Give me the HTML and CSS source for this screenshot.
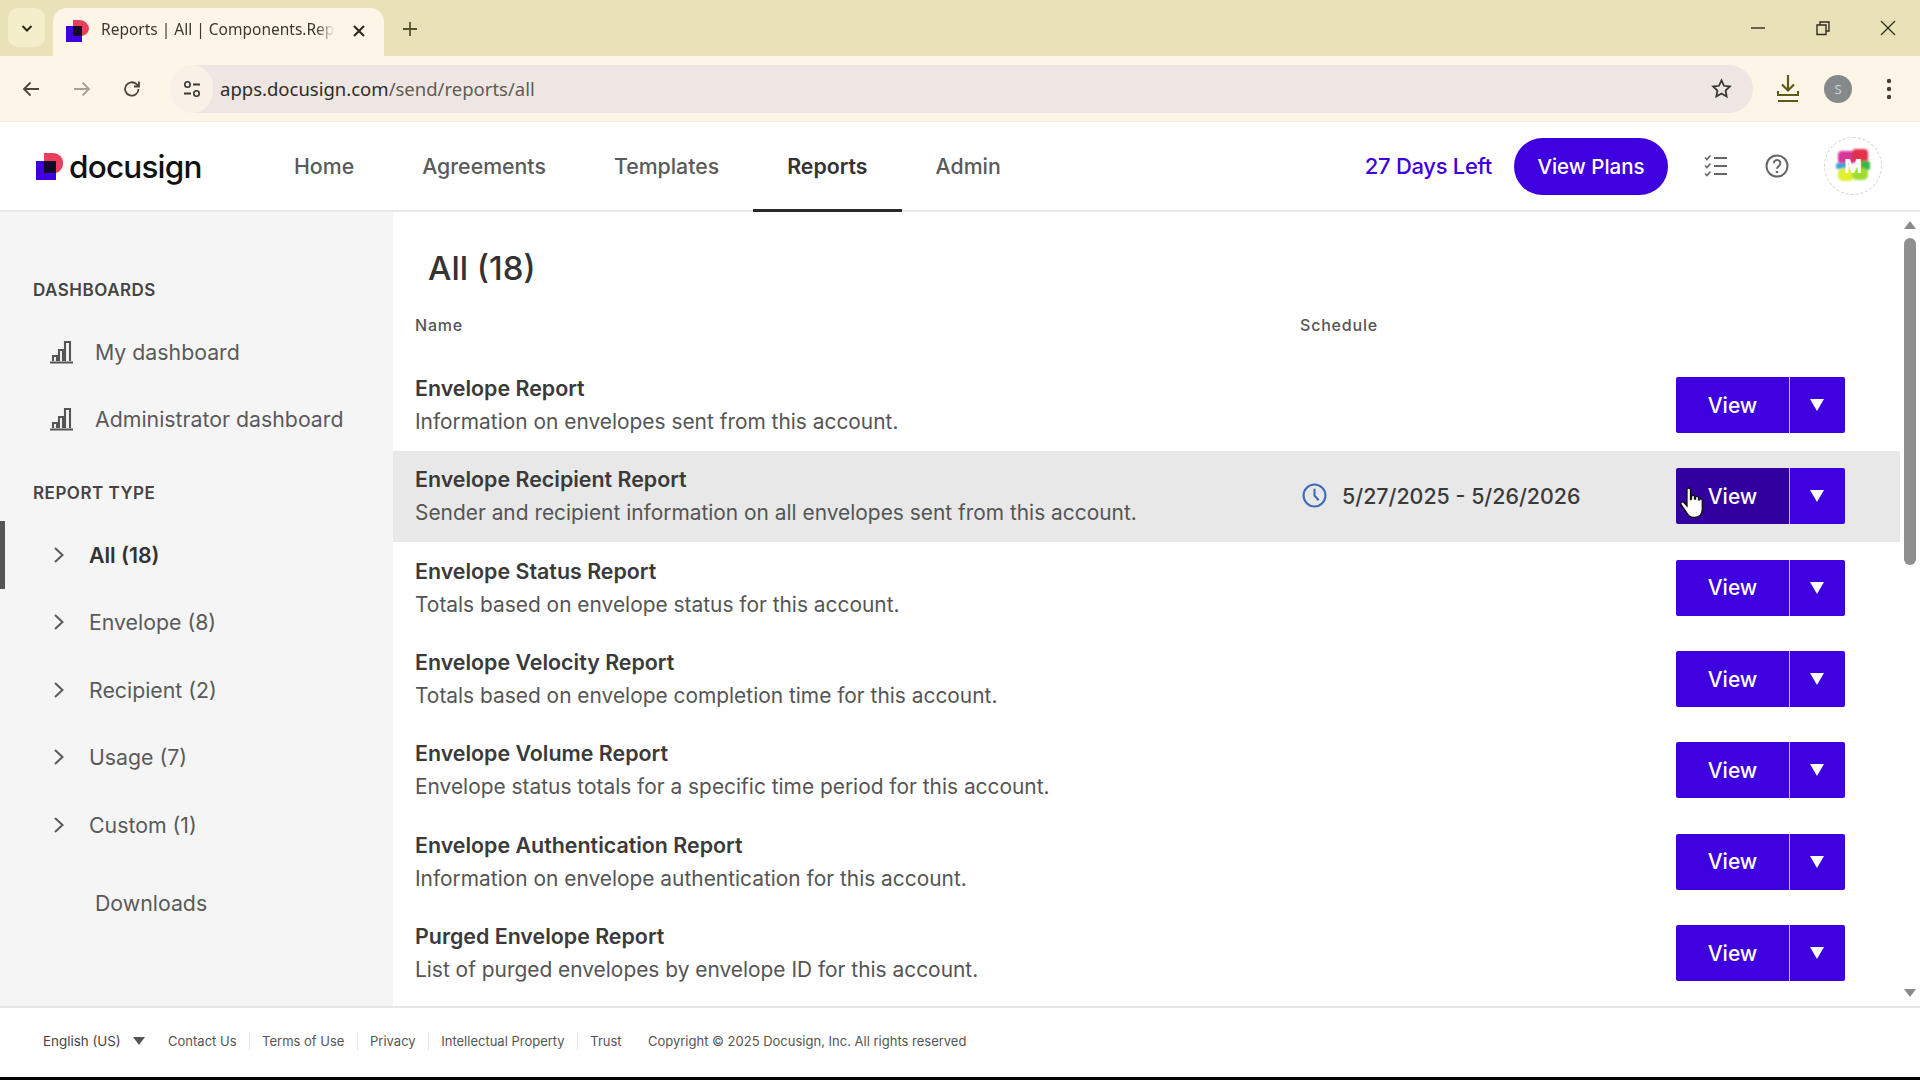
FILE: index.html
```html
<!DOCTYPE html>
<html lang="en">
<head>
<meta charset="utf-8">
<title>Reports | All | Components.Reports</title>
<link rel="stylesheet" href="styles.css">
</head>
<body>
<div class="window">
  <div class="tabbar">
    <div class="tab-list"><svg viewBox="0 0 16 16" width="16" height="16"><path d="M3.5 6 8 10.5 12.5 6" fill="none" stroke="#2b2a1c" stroke-width="2"/></svg></div>
    <div class="tab">
      <svg class="favicon" viewBox="0 0 23 22" width="23" height="22"><path d="M7 0h7a9 9 0 0 1 9 9 9 9 0 0 1-7 7H7z" fill="#e8405c"/><rect x="0" y="6" width="16" height="16" fill="#3f00e0"/><rect x="7" y="6" width="9" height="10" fill="#14082a"/></svg>
      <span class="tab-title">Reports | All | Components.Rep</span>
      <svg class="tab-close" viewBox="0 0 14 14" width="14" height="14"><path d="M2 2l10 10M12 2 2 12" stroke="#2f2c20" stroke-width="2.2"/></svg>
    </div>
    <svg class="new-tab" viewBox="0 0 16 16" width="16" height="16"><path d="M8 1v14M1 8h14" stroke="#55502e" stroke-width="1.8"/></svg>
    <div class="win-controls">
      <svg viewBox="0 0 16 16" width="16" height="16"><path d="M1 8h14" stroke="#2f2c20" stroke-width="1.4"/></svg>
      <svg viewBox="0 0 16 16" width="16" height="16"><path d="M2 5h9v9.500H2zM5 5V2h9v9h-3" fill="none" stroke="#2f2c20" stroke-width="1.4"/></svg>
      <svg viewBox="0 0 16 16" width="16" height="16"><path d="M1 1l14 14M15 1 1 15" stroke="#2f2c20" stroke-width="1.3"/></svg>
    </div>
  </div>
  <div class="toolbar">
    <div class="tool"><svg viewBox="0 0 20 20" width="20" height="20"><path d="M18 10H3M9.500 3.500 3 10l6.500 6.500" fill="none" stroke="#4a463c" stroke-width="1.8"/></svg></div>
    <div class="tool"><svg viewBox="0 0 20 20" width="20" height="20"><path d="M2 10h15M10.500 3.500 17 10l-6.500 6.500" fill="none" stroke="#a5a196" stroke-width="1.8"/></svg></div>
    <div class="tool"><svg viewBox="0 0 20 20" width="20" height="20"><path d="M16.500 10a6.700 6.700 0 1 1-2-4.800L17 7.500M17 2.500v5h-5" fill="none" stroke="#4a463c" stroke-width="1.8"/></svg></div>
    <div class="address">
      <span class="site-chip"><svg viewBox="0 0 20 20" width="20" height="20"><circle cx="5.500" cy="5.500" r="2.700" fill="none" stroke="#3a3730" stroke-width="1.600"/><path d="M11 5.500h7M2 14.500h7" stroke="#3a3730" stroke-width="1.800"/><circle cx="14.500" cy="14.500" r="2.700" fill="none" stroke="#3a3730" stroke-width="1.600"/></svg></span>
      <span class="url">apps.docusign.com<span class="url-path">/send/reports/all</span></span>
      <svg class="star" viewBox="0 0 20 20" width="21" height="21"><path d="M10 2.200l2.400 5.200 5.600.7-4.100 3.900 1 5.600-4.900-2.800-4.900 2.800 1-5.600L2 8.100l5.600-.7z" fill="none" stroke="#3a3730" stroke-width="1.700"/></svg>
    </div>
    <svg class="dl" viewBox="0 0 24 30" width="24" height="30"><path d="M12 1v15M6 10.500l6 6 6-6" fill="none" stroke="#5f5a14" stroke-width="2.200"/><path d="M2 17v4h20v-4" fill="none" stroke="#5f5a14" stroke-width="2"/><path d="M2 27h20" stroke="#5f5a14" stroke-width="2"/></svg>
    <span class="profile">S</span>
    <svg class="kebab" viewBox="0 0 6 22" width="6" height="22"><circle cx="3" cy="3" r="2.200" fill="#45423a"/><circle cx="3" cy="11" r="2.200" fill="#45423a"/><circle cx="3" cy="19" r="2.200" fill="#45423a"/></svg>
  </div>

  <header class="appbar">
    <div class="logo">
      <svg viewBox="0 0 27 27" width="27" height="27"><path d="M8 0h10a9.500 9.500 0 0 1 9 10 9.500 9.500 0 0 1-7 10H8z" fill="#e8405c"/><rect x="0" y="8" width="20" height="19" fill="#3f00e0"/><rect x="8" y="8" width="12" height="12" fill="#12062a"/></svg>
      <span class="logo-text">docusign</span>
    </div>
    <nav class="nav">
      <a class="nav-item">Home</a>
      <a class="nav-item">Agreements</a>
      <a class="nav-item">Templates</a>
      <a class="nav-item active">Reports</a>
      <a class="nav-item">Admin</a>
    </nav>
    <div class="appbar-right">
      <span class="days">27 Days Left</span>
      <button class="plans">View Plans</button>
      <svg class="tasks" viewBox="0 0 24 24" width="24" height="24"><path d="M1 3.500l2 2 3.500-4M1 11.500l2 2 3.500-4M1 19.500l2 2 3.500-4" fill="none" stroke="#666" stroke-width="1.600"/><path d="M10 4h13M10 12h13M10 20h13" stroke="#666" stroke-width="2.200"/></svg>
      <svg class="help" viewBox="0 0 24 24" width="24" height="24"><circle cx="12" cy="12" r="10.500" fill="none" stroke="#666" stroke-width="2"/><path d="M8.800 9.300a3.300 3.300 0 1 1 5 2.800c-1.200.8-1.800 1.300-1.800 2.700" fill="none" stroke="#666" stroke-width="2"/><circle cx="12" cy="18" r="1.300" fill="#666"/></svg>
      <div class="avatar">
        <svg viewBox="0 0 40 40" width="40" height="40">
          <defs><filter id="soft"><feGaussianBlur stdDeviation="1.200"/></filter></defs>
          <g filter="url(#soft)">
            <rect x="5" y="5" width="16" height="13" rx="4" fill="#d6369a"/>
            <rect x="19" y="3" width="16" height="14" rx="4" fill="#e0324a"/>
            <rect x="3" y="17" width="12" height="6" rx="2" fill="#3aa0d8"/>
            <rect x="27" y="15" width="10" height="9" rx="2" fill="#39b54a"/>
            <rect x="5" y="22" width="16" height="13" rx="5" fill="#dff02e"/>
            <rect x="19" y="22" width="16" height="12" rx="5" fill="#9fdc32"/>
          </g>
          <text x="20" y="27" class="avatar-m">M</text>
        </svg>
      </div>
    </div>
  </header>

  <div class="body">
    <aside class="sidebar">
      <h2 class="side-head">DASHBOARDS</h2>
      <a class="side-item dash"><svg viewBox="0 0 24 24" width="24" height="24"><path d="M1 22.500h23M4 21v-5h4v5M10 21V10h4v11M16 21V2h5v19" fill="none" stroke="#555" stroke-width="2.100"/></svg><span>My dashboard</span></a>
      <a class="side-item dash"><svg viewBox="0 0 24 24" width="24" height="24"><path d="M1 22.500h23M4 21v-5h4v5M10 21V10h4v11M16 21V2h5v19" fill="none" stroke="#555" stroke-width="2.100"/></svg><span>Administrator dashboard</span></a>
      <h2 class="side-head second">REPORT TYPE</h2>
      <a class="side-item type current"><svg viewBox="0 0 12 18" width="12" height="18"><path d="M2 2l7.500 7L2 16" fill="none" stroke="#5a5a5a" stroke-width="2"/></svg><span>All (18)</span></a>
      <a class="side-item type"><svg viewBox="0 0 12 18" width="12" height="18"><path d="M2 2l7.500 7L2 16" fill="none" stroke="#5a5a5a" stroke-width="2"/></svg><span>Envelope (8)</span></a>
      <a class="side-item type"><svg viewBox="0 0 12 18" width="12" height="18"><path d="M2 2l7.500 7L2 16" fill="none" stroke="#5a5a5a" stroke-width="2"/></svg><span>Recipient (2)</span></a>
      <a class="side-item type"><svg viewBox="0 0 12 18" width="12" height="18"><path d="M2 2l7.500 7L2 16" fill="none" stroke="#5a5a5a" stroke-width="2"/></svg><span>Usage (7)</span></a>
      <a class="side-item type"><svg viewBox="0 0 12 18" width="12" height="18"><path d="M2 2l7.500 7L2 16" fill="none" stroke="#5a5a5a" stroke-width="2"/></svg><span>Custom (1)</span></a>
      <a class="side-item downloads"><span>Downloads</span></a>
    </aside>

    <main class="main">
      <div class="content">
        <h1 class="title">All (18)</h1>
        <div class="table-head"><span>Name</span><span>Schedule</span></div>

        <div class="row">
          <div><div class="row-title">Envelope Report</div><div class="row-desc">Information on envelopes sent from this account.</div></div>
          <div></div>
          <div class="split"><button class="split-main">View</button><button class="split-caret"><svg viewBox="0 0 14 12" width="14" height="12"><path d="M0 0h14L7 12z" fill="#fff"/></svg></button></div>
        </div>
        <div class="row hovered">
          <div><div class="row-title">Envelope Recipient Report</div><div class="row-desc">Sender and recipient information on all envelopes sent from this account.</div></div>
          <div class="sched"><svg viewBox="0 0 24 24" width="25" height="25"><circle cx="12" cy="12" r="10.500" fill="none" stroke="#3f6db5" stroke-width="2"/><path d="M12 5.500V12l4 4.500" fill="none" stroke="#3f6db5" stroke-width="2"/></svg><span>5/27/2025 - 5/26/2026</span></div>
          <div class="split"><button class="split-main">View</button><button class="split-caret"><svg viewBox="0 0 14 12" width="14" height="12"><path d="M0 0h14L7 12z" fill="#fff"/></svg></button>
            <svg class="cursor" viewBox="0 0 24 32" width="24" height="34"><path d="M7 2.500c0-2 3.500-2 3.500 0v10l1-.5V9.500c0-1.700 3-1.700 3 0V12l1 .2v-1.500c0-1.700 3-1.700 3 0v2l1 .3c0-1.500 2.800-1.500 2.800 0V22c0 5-3 8.500-8 8.500-4.500 0-6-2-8-5.500L1 17.500c-1-2 1.500-3.500 3-2l3 3.500z" fill="#fff" stroke="#111" stroke-width="1.300"/></svg>
          </div>
        </div>
        <div class="row">
          <div><div class="row-title">Envelope Status Report</div><div class="row-desc">Totals based on envelope status for this account.</div></div>
          <div></div>
          <div class="split"><button class="split-main">View</button><button class="split-caret"><svg viewBox="0 0 14 12" width="14" height="12"><path d="M0 0h14L7 12z" fill="#fff"/></svg></button></div>
        </div>
        <div class="row">
          <div><div class="row-title">Envelope Velocity Report</div><div class="row-desc">Totals based on envelope completion time for this account.</div></div>
          <div></div>
          <div class="split"><button class="split-main">View</button><button class="split-caret"><svg viewBox="0 0 14 12" width="14" height="12"><path d="M0 0h14L7 12z" fill="#fff"/></svg></button></div>
        </div>
        <div class="row">
          <div><div class="row-title">Envelope Volume Report</div><div class="row-desc">Envelope status totals for a specific time period for this account.</div></div>
          <div></div>
          <div class="split"><button class="split-main">View</button><button class="split-caret"><svg viewBox="0 0 14 12" width="14" height="12"><path d="M0 0h14L7 12z" fill="#fff"/></svg></button></div>
        </div>
        <div class="row">
          <div><div class="row-title">Envelope Authentication Report</div><div class="row-desc">Information on envelope authentication for this account.</div></div>
          <div></div>
          <div class="split"><button class="split-main">View</button><button class="split-caret"><svg viewBox="0 0 14 12" width="14" height="12"><path d="M0 0h14L7 12z" fill="#fff"/></svg></button></div>
        </div>
        <div class="row">
          <div><div class="row-title">Purged Envelope Report</div><div class="row-desc">List of purged envelopes by envelope ID for this account.</div></div>
          <div></div>
          <div class="split"><button class="split-main">View</button><button class="split-caret"><svg viewBox="0 0 14 12" width="14" height="12"><path d="M0 0h14L7 12z" fill="#fff"/></svg></button></div>
        </div>
      </div>
      <div class="scrollbar">
        <svg viewBox="0 0 12 8" width="12" height="8"><path d="M0 8l6-8 6 8z" fill="#8a8a8a"/></svg>
        <div class="scroll-track"><div class="scroll-thumb"></div></div>
        <svg viewBox="0 0 12 8" width="12" height="8"><path d="M0 0l6 8 6-8z" fill="#8a8a8a"/></svg>
      </div>
    </main>
  </div>

  <footer class="footer">
    <span class="lang">English (US)<svg viewBox="0 0 12 8" width="12" height="8"><path d="M0 0h12L6 8z" fill="#555"/></svg></span>
    <a class="foot-link">Contact Us</a>
    <a class="foot-link">Terms of Use</a>
    <a class="foot-link">Privacy</a>
    <a class="foot-link">Intellectual Property</a>
    <a class="foot-link last">Trust</a>
    <span class="copyright">Copyright © 2025 Docusign, Inc. All rights reserved</span>
  </footer>
  <div class="taskbar"></div>
</div>
</body>
</html>
```

FILE: styles.css
```css
* { box-sizing: border-box; }
html, body { margin: 0; height: 100%; overflow: hidden; }
body { font-family: Inter, "Liberation Sans", sans-serif; color: #333; background: #fff; }
svg { display: block; flex: none; }
button { font-family: inherit; border: 0; cursor: pointer; }

.window { width: 1920px; height: 1080px; display: flex; flex-direction: column; }

/* browser chrome */
.tabbar { height: 56px; flex: none; background: #e9e2b9; display: flex; align-items: flex-end; padding-left: 8px; position: relative; }
.tab-list { width: 37px; height: 39px; margin-bottom: 9px; border-radius: 10px; background: #f5eecb; display: flex; align-items: center; justify-content: center; }
.tab { width: 331px; height: 48px; margin-left: 8px; padding-left: 13px; background: #fdf6e8; border-radius: 14px 14px 0 0; display: flex; align-items: center; }
.favicon { margin-top: -2px; }
.tab-title { width: 234px; margin-left: 12px; padding-bottom: 6px; font: 15.500px "Noto Sans", sans-serif; color: #3a3830; white-space: nowrap; -webkit-mask-image: linear-gradient(90deg, #000 92%, transparent); mask-image: linear-gradient(90deg, #000 92%, transparent); }
.tab-close { margin-left: 17px; margin-bottom: 2px; }
.new-tab { margin: 0 0 19px 18px; }
.win-controls { margin-left: auto; align-self: stretch; display: flex; align-items: center; gap: 49px; padding-right: 24px; padding-bottom: 0; }

.toolbar { height: 66px; flex: none; background: #fdf6e8; display: flex; align-items: center; padding-left: 10px; border-bottom: 1px solid #efe9dd; }
.tool { width: 42px; height: 42px; margin-right: 8.500px; display: flex; align-items: center; justify-content: center; }
.address { width: 1582px; height: 48px; margin-left: 9.500px; border-radius: 24px; background: #eee6e2; display: flex; align-items: center; }
.site-chip { width: 42px; height: 48px; border-radius: 24px; background: #f9f1e8; display: flex; align-items: center; justify-content: center; }
.url { margin-left: 7px; font: 18.500px "Noto Sans", sans-serif; color: #2e2c28; white-space: nowrap; }
.url-path { color: #5f5c55; }
.star { margin-left: auto; margin-right: 21px; }
.dl { margin-left: 23px; }
.profile { width: 28px; height: 28px; margin-left: 24px; border-radius: 50%; background: #85898c; color: #c6d2dc; font: 13px/28px "Noto Sans", sans-serif; text-align: center; }
.kebab { margin-left: 34px; }

/* app header */
.appbar { height: 90px; flex: none; display: flex; align-items: stretch; padding: 0 38px 0 36px; border-bottom: 2px solid #e9e9e9; background: #fff; }
.logo { display: flex; align-items: center; width: 166px; gap: 6px; }
.logo-text { padding-top: 2px; font-size: 31.500px; font-weight: 500; letter-spacing: -0.8px; color: #111; line-height: 1; }
.nav { display: flex; margin-left: 58px; }
.nav-item { display: flex; align-items: center; padding: 0 34px; font-size: 21.300px; font-weight: 500; color: #5a5a5a; margin-bottom: -2px; border-bottom: 3px solid transparent; }
.nav-item.active { color: #333; border-bottom-color: #2a2a2a; font-weight: 600; }
.appbar-right { margin-left: auto; display: flex; align-items: center; }
.days { font-size: 22px; font-weight: 500; color: #3f00e0; letter-spacing: -0.3px; }
.plans { width: 154px; height: 57px; margin-left: 22px; border-radius: 29px; background: #3f00e0; color: #fff; font-size: 20.500px; font-weight: 500; }
.tasks { margin-left: 36px; }
.help { margin-left: 37px; }
.avatar { width: 58px; height: 58px; margin-left: 35px; border-radius: 50%; border: 1px dashed #cfcfcf; display: flex; align-items: center; justify-content: center; }
.avatar-m { font: 700 19px Inter, sans-serif; fill: #fff; text-anchor: middle; }

/* body */
.body { flex: 1; min-height: 0; display: flex; }
.sidebar { width: 393px; flex: none; background: #f5f5f6; padding-top: 66px; }
.side-head { margin: 0 0 16px 33px; height: 24px; font-size: 17px; line-height: 24px; font-weight: 600; letter-spacing: 0.5px; color: #444; }
.side-head.second { margin-top: 28px; }
.side-item { height: 67.500px; display: flex; align-items: center; font-size: 21.300px; color: #5a5a5a; }
.dash { padding-left: 49px; }
.dash span { margin-left: 22px; }
.type { padding-left: 53px; }
.type span { margin-left: 24px; }
.type.current { color: #333; font-weight: 600; box-shadow: inset 5px 0 0 #555; }
.downloads { padding-left: 95px; margin-top: 11px; }

.main { flex: 1; min-width: 0; display: flex; }
.content { flex: 1; min-width: 0; padding-top: 36px; overflow: hidden; }
.title { margin: 0 0 27px 35px; height: 40px; font-size: 33px; line-height: 40px; font-weight: 500; color: #333; }
.table-head { display: grid; grid-template-columns: 885px 1fr; height: 20px; margin-bottom: 24.500px; padding-left: 22px; font-size: 16px; line-height: 20px; font-weight: 500; letter-spacing: 0.8px; color: #555; }
.row { height: 91.330px; display: grid; grid-template-columns: 885px 1fr 169px; align-items: center; padding: 0 55px 0 22px; }
.row.hovered { background: #e8e8e8; }
.row-title { font-size: 21.400px; line-height: 34px; font-weight: 600; color: #3a3a3a; }
.row-desc { font-size: 20.900px; line-height: 34px; color: #555; }
.sched { display: flex; align-items: center; gap: 15px; padding: 0 0 1px 2px; font-size: 21.400px; font-weight: 500; color: #3a3a3a; }
.split { display: flex; height: 56px; position: relative; }
.split-main { width: 113px; height: 56px; border-radius: 2px 0 0 2px; background: #3f00e0; color: #fff; font-size: 21px; font-weight: 500; }
.split-caret { width: 56px; height: 56px; padding: 0 2px 0 0; border-left: 1px solid #c9b4ff; border-radius: 0 2px 2px 0; background: #3f00e0; display: flex; align-items: center; justify-content: center; }
.hovered .split-main { background: #32009f; }
.cursor { position: absolute; left: 4px; top: 18px; }

.scrollbar { width: 20px; flex: none; display: flex; flex-direction: column; align-items: center; padding: 9px 0 9px; }
.scroll-track { flex: 1; width: 12px; padding-top: 9px; }
.scroll-thumb { height: 327px; border-radius: 6px; background: #8f8f8f; }

/* footer */
.footer { height: 71px; flex: none; display: flex; align-items: center; padding: 0 0 4px 43px; border-top: 2px solid #e6e6e6; background: #fff; font-size: 13px; color: #555; white-space: nowrap; }
.lang { display: flex; align-items: center; gap: 12px; font-size: 13.400px; color: #444; margin-right: 11px; }
.foot-link { padding: 0 12.300px; line-height: 18px; border-right: 1px solid #e6e6e6; }
.foot-link.last { border-right: 0; }
.copyright { margin-left: 14px; }
.taskbar { height: 3px; flex: none; background: #000; }
```
